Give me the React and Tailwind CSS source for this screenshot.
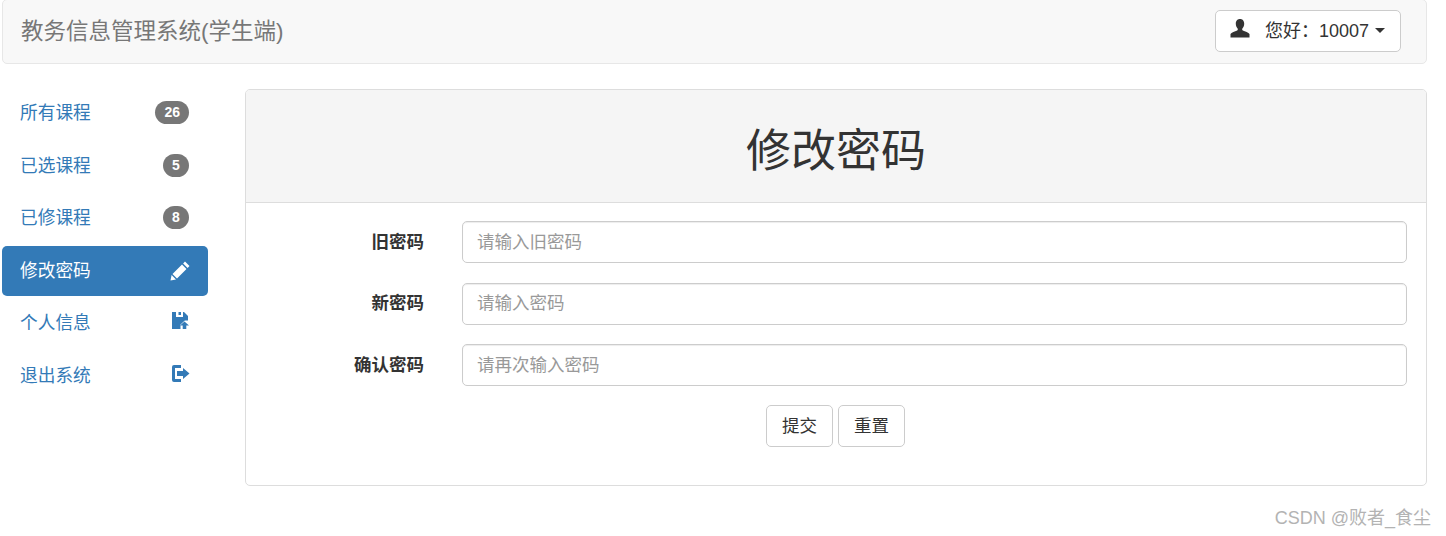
const font = { fontFamily: '"Liberation Sans", "Noto Sans CJK SC", sans-serif' };

const PencilIcon = () => (
  <svg className="w-[20px] h-[20px]" viewBox="0 0 20 20" fill="currentColor">
    <path d="M15 0.500l4.500 4.500-1.900 1.900-4.500-4.500zM12 3.500l4.500 4.500-9.500 9.500-4.500-4.500zM1.600 14l4.400 4.400-5.500 1.200z" />
  </svg>
);

const SaveIcon = () => (
  <svg className="w-[19px] h-[19px] -mt-[6px]" viewBox="0 0 19 19" fill="currentColor">
    <path d="M1 1h4v5h7V1h1l4 4v4.500h-3.200L9.500 13.500V18H1z" />
    <path d="M7.500 1h2.500v3H7.500z" />
    <path d="M13.500 10.500l4.500 4h-2.700V18h-3.600v-3.500H9z" />
  </svg>
);

const LogoutIcon = () => (
  <svg className="w-[20px] h-[20px] -mt-[4px]" viewBox="0 0 20 20" fill="currentColor">
    <path d="M4 1h7v3H5v11h6v3H4a2 2 0 0 1-2-2V3a2 2 0 0 1 2-2z" />
    <path d="M13 4l6.500 5.500-6.500 5.500V12H7V7h6z" />
  </svg>
);

const UserIcon = () => (
  <svg className="w-[20px] h-[20px] -mt-[3px]" viewBox="0 0 20 20" fill="currentColor">
    <path d="M10 0c3 0 4.200 2.200 4.200 4.800 0 1.900-.8 3.600-1.800 4.700-.4.500-.3 1.500.4 1.900 2.300 1 5.800 1.700 6.700 3.600v3.500H.5V15c.9-1.900 4.400-2.600 6.700-3.600.7-.4.800-1.400.4-1.900-1-1.100-1.800-2.800-1.800-4.700C5.800 2.200 7 0 10 0z" />
  </svg>
);

const navItems = [
  { label: "所有课程", badge: "26" },
  { label: "已选课程", badge: "5" },
  { label: "已修课程", badge: "8" },
  { label: "修改密码", icon: <PencilIcon />, active: true },
  { label: "个人信息", icon: <SaveIcon /> },
  { label: "退出系统", icon: <LogoutIcon /> },
];

const fields = [
  { label: "旧密码", placeholder: "请输入旧密码" },
  { label: "新密码", placeholder: "请输入密码" },
  { label: "确认密码", placeholder: "请再次输入密码" },
];

export default function App() {
  return (
    <div className="w-[1446px] h-[536px] bg-white overflow-hidden relative text-[#333]" style={font}>
      <header className="ml-[2px] mt-[-1px] w-[1425px] h-[65px] bg-[#f8f8f8] border border-[#e7e7e7] rounded-[5px] flex items-center justify-between pl-[18px] pr-[25px]">
        <span className="text-[22.5px] text-[#777] mt-[1px]">教务信息管理系统(学生端)</span>
        <button className="h-[42px] w-[186px] -mt-[2px] bg-white border border-[#ccc] rounded-[5px] flex items-center pl-[14px] text-[18px] text-[#333]">
          <UserIcon />
          <span className="ml-[15px] mt-[2px]">您好：10007</span>
          <span className="ml-[6px] w-0 h-0 border-x-[5px] border-x-transparent border-t-[5px] border-t-[#333]" />
        </button>
      </header>

      <div className="flex mt-[25px] ml-[2px]">
        <nav className="w-[206px] flex flex-col gap-[2.5px] -mt-[0.75px]">
          {navItems.map((item) => (
            <div
              key={item.label}
              className={`h-[50px] flex items-center justify-between pl-[18px] rounded-[5px] text-[17.7px] ${
                item.active ? "bg-[#337ab7] text-white" : "text-[#337ab7]"
              }`}
            >
              <span className="mt-[1px]">{item.label}</span>
              {item.badge ? (
                <span className="mr-[19px] min-w-[26px] h-[23px] px-[9px] -mt-[1px] rounded-full bg-[#777] text-white text-[14px] font-bold flex items-center justify-center">
                  {item.badge}
                </span>
              ) : (
                <span className="mr-[18px] flex">{item.icon}</span>
              )}
            </div>
          ))}
        </nav>

        <main className="ml-[37px] w-[1182px] h-[397px] border border-[#ddd] rounded-[5px] overflow-hidden">
          <div className="h-[113px] bg-[#f5f5f5] border-b border-[#ddd] flex items-center justify-center">
            <h1 className="text-[45px] font-normal mt-[11px]">修改密码</h1>
          </div>
          <form className="pt-[18px] flex flex-col gap-[19.5px]">
            {fields.map((field) => (
              <div key={field.label} className="flex items-center">
                <label className="w-[178px] text-right text-[17.5px] font-bold">{field.label}</label>
                <input
                  className="ml-[38px] w-[945px] h-[42px] pl-[14px] pr-[15px] border border-[#ccc] rounded-[5px] text-[17.5px] shadow-[inset_0_1px_1px_rgba(0,0,0,0.075)] placeholder:text-[#999] outline-none"
                  placeholder={field.placeholder}
                />
              </div>
            ))}
            <div className="flex justify-center gap-[5px] pr-[2px] -mt-[1px]">
              <button type="button" className="w-[67px] h-[42px] pl-[1px] pt-[1px] bg-white border border-[#ccc] rounded-[5px] text-[17.5px]">提交</button>
              <button type="button" className="w-[67px] h-[42px] pl-[1px] pt-[1px] bg-white border border-[#ccc] rounded-[5px] text-[17.5px]">重置</button>
            </div>
          </form>
        </main>
      </div>

      <span className="absolute right-[15px] bottom-[4px] text-[18px] text-[#b3b3b3]">CSDN @败者_食尘</span>
    </div>
  );
}
